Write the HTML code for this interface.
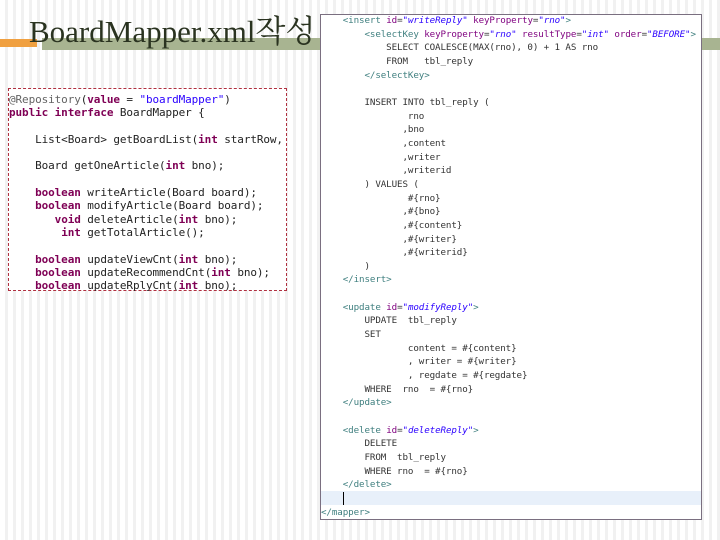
<!DOCTYPE html>
<html><head><meta charset="utf-8"><style>
html,body{margin:0;padding:0}
body{width:720px;height:540px;position:relative;overflow:hidden;background:#fff;
background-image:repeating-linear-gradient(90deg,#fff 0,#fff 5px,#f1f1f1 5px,#f1f1f1 8px);}
.orange{position:absolute;left:0;top:39px;width:37px;height:8px;background:#f0a040}
.green{position:absolute;left:42px;top:38px;width:678px;height:12px;background:#a8b491}
.title{position:absolute;left:29px;top:14px;font-family:"Liberation Serif","Noto Serif CJK SC",serif;font-size:31px;color:#2a3320;white-space:nowrap;line-height:36px}
.left{position:absolute;left:8px;top:88px;width:277px;height:201px;border:1px dashed #b03040;background:#fff}
.code{position:absolute;font-family:"DejaVu Sans Mono","Liberation Mono",monospace;white-space:pre;color:#222}
.left .code{left:0;top:4px;font-size:11px;line-height:13.3px;letter-spacing:-0.1px}
.k{color:#7f0055;font-weight:bold}.s{color:#2a00ff}
.right{position:absolute;left:320px;top:14px;width:380px;height:504px;border:1px solid #7a6f80;background:#fff}
.right .code{left:0;top:-1px;font-size:9.2px;line-height:13.65px;color:#333;letter-spacing:-0.1px}
.t{color:#3f7f7f}.a{color:#7f007f}.v{color:#2a00ff;font-style:italic}
.hl{position:absolute;left:0;top:476px;width:380px;height:14px;background:#e8f0fa}
.cur{position:absolute;left:22px;top:477px;width:1px;height:13px;background:#000}
</style></head><body>
<div class="orange"></div><div class="green"></div>
<div class="title">BoardMapper.xml작성</div>
<div class="left"><div class="code"><span style="color:#646464">@Repository</span>(<span class="k">value</span> = <span class="s">"boardMapper"</span>)
<span class="k">public interface</span> BoardMapper {

    List&lt;Board&gt; getBoardList(<span class="k">int</span> startRow,

    Board getOneArticle(<span class="k">int</span> bno);

    <span class="k">boolean</span> writeArticle(Board board);
    <span class="k">boolean</span> modifyArticle(Board board);
       <span class="k">void</span> deleteArticle(<span class="k">int</span> bno);
        <span class="k">int</span> getTotalArticle();

    <span class="k">boolean</span> updateViewCnt(<span class="k">int</span> bno);
    <span class="k">boolean</span> updateRecommendCnt(<span class="k">int</span> bno);
    <span class="k">boolean</span> updateRplyCnt(<span class="k">int</span> bno);</div></div>
<div class="right"><div class="hl"></div><div class="cur"></div><div class="code">    <span class="t">&lt;insert</span> <span class="a">id</span>=<span class="v">"writeReply"</span> <span class="a">keyProperty</span>=<span class="v">"rno"</span><span class="t">&gt;</span>
        <span class="t">&lt;selectKey</span> <span class="a">keyProperty</span>=<span class="v">"rno"</span> <span class="a">resultType</span>=<span class="v">"int"</span> <span class="a">order</span>=<span class="v">"BEFORE"</span><span class="t">&gt;</span>
            SELECT COALESCE(MAX(rno), 0) + 1 AS rno
            FROM   tbl_reply
        <span class="t">&lt;/selectKey&gt;</span>

        INSERT INTO tbl_reply (
                rno
               ,bno
               ,content
               ,writer
               ,writerid
        ) VALUES (
                #{rno}
               ,#{bno}
               ,#{content}
               ,#{writer}
               ,#{writerid}
        )
    <span class="t">&lt;/insert&gt;</span>

    <span class="t">&lt;update</span> <span class="a">id</span>=<span class="v">"modifyReply"</span><span class="t">&gt;</span>
        UPDATE  tbl_reply
        SET
                content = #{content}
                , writer = #{writer}
                , regdate = #{regdate}
        WHERE  rno  = #{rno}
    <span class="t">&lt;/update&gt;</span>

    <span class="t">&lt;delete</span> <span class="a">id</span>=<span class="v">"deleteReply"</span><span class="t">&gt;</span>
        DELETE
        FROM  tbl_reply
        WHERE rno  = #{rno}
    <span class="t">&lt;/delete&gt;</span>

<span class="t">&lt;/mapper&gt;</span></div></div>
</body></html>
